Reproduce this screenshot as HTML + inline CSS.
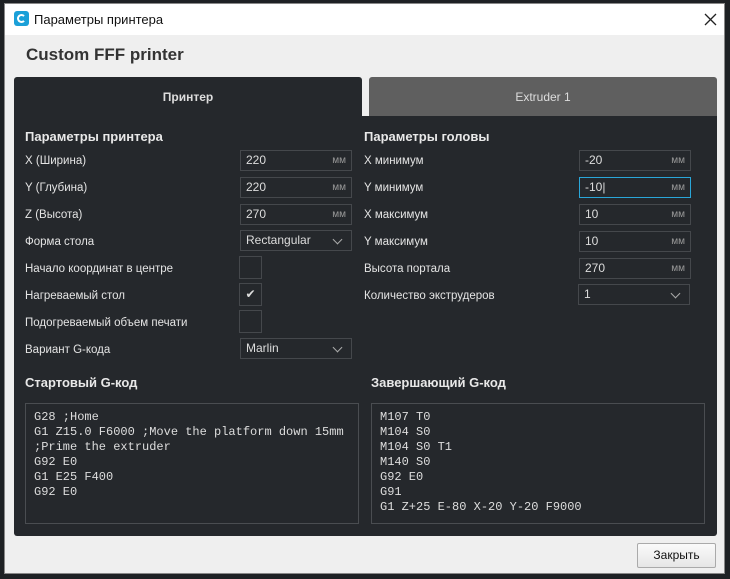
<!DOCTYPE html>
<html><head><meta charset="utf-8"><style>
*{box-sizing:border-box;margin:0;padding:0}
body{width:730px;height:579px;background:#1e2124;position:relative;overflow:hidden;font-family:"Liberation Sans","DejaVu Sans",sans-serif}
.win{position:absolute;left:4px;top:3px;width:721px;height:571px;background:#efefef;border:1px solid #888}
.title{position:absolute;left:0;top:0;right:0;height:31px;background:#fff}
.title .t{position:absolute;left:29px;top:8px;font-size:13px;color:#111}
.logo{position:absolute;left:9px;top:7px;width:15px;height:15px;background:#1ba0d8;border-radius:3px}
.logo:after{content:"";position:absolute;left:3px;top:3px;width:5px;height:5px;border:2px solid #fff;border-right-color:transparent;border-radius:50%}
.x{position:absolute;right:7px;top:9px;width:13px;height:13px}
.h1{position:absolute;left:21px;top:41px;font-size:17px;font-weight:bold;color:#333}
.panel{position:absolute;left:9px;top:112px;width:703px;height:420px;background:#25282c;border-radius:0 0 3px 3px}
.tab2{position:absolute;left:364px;top:73px;width:348px;height:39px;background:#5f5f5f;border-radius:3px 3px 0 0;color:#ddd;font-size:12px;text-align:center;line-height:41px}
.tab1{position:absolute;left:9px;top:73px;width:348px;height:40px;background:#25282c;border-radius:3px 3px 0 0;color:#ddd;font-size:12px;text-align:center;line-height:41px;font-weight:bold}
.a{position:absolute;color:#e4e4e4;font-size:11.5px;margin-top:2px}
.hd{position:absolute;color:#e8e8e8;font-size:13px;font-weight:bold}
.f{position:absolute;width:112px;height:21px;border:1px solid #45484c;color:#ddd;font-size:12px;line-height:19px;padding-left:5px}
.f i{position:absolute;right:5px;top:0;font-style:normal;font-size:10px;color:#999}
.f.sel{border-color:#2aa6d8}
.cb{position:absolute;width:23px;height:23px;border:1px solid #45484c;color:#ddd;font-size:12px;text-align:center;line-height:21px}
.chev{position:absolute;right:10px;top:5px;width:7px;height:7px;border-right:1.5px solid #aaa;border-bottom:1.5px solid #aaa;transform:rotate(45deg)}
.code{position:absolute;border:1px solid #4a4d51;font-family:"Liberation Mono",monospace;font-size:12px;line-height:15px;color:#ddd;padding:6px 8px;white-space:pre}
.btn{position:absolute;left:637px;top:543px;width:79px;height:25px;border:1px solid #aaa;background:linear-gradient(#fafafa,#e6e6e6);font-size:12px;color:#111;text-align:center;line-height:23px;border-radius:2px}
</style></head><body>
<div class="win">
<div class="title"><div class="logo"></div><div class="t">Параметры принтера</div><svg class="x" viewBox="0 0 13 13"><path d="M1 1L12 12M12 1L1 12" stroke="#222" stroke-width="1.3"/></svg></div>
<div class="h1">Custom FFF printer</div>
<div class="panel"></div>
<div class="tab2">Extruder 1</div>
<div class="tab1">Принтер</div>
</div>
<div class="hd" style="left:25px;top:129px">Параметры принтера</div>
<div class="a" style="left:25px;top:153px">X (Ширина)</div>
<div class="a" style="left:25px;top:180px">Y (Глубина)</div>
<div class="a" style="left:25px;top:207px">Z (Высота)</div>
<div class="a" style="left:25px;top:234px">Форма стола</div>
<div class="a" style="left:25px;top:261px">Начало координат в центре</div>
<div class="a" style="left:25px;top:288px">Нагреваемый стол</div>
<div class="a" style="left:25px;top:315px">Подогреваемый объем печати</div>
<div class="a" style="left:25px;top:342px">Вариант G-кода</div>
<div class="f" style="left:240px;top:150px">220<i>мм</i></div>
<div class="f" style="left:240px;top:177px">220<i>мм</i></div>
<div class="f" style="left:240px;top:204px">270<i>мм</i></div>
<div class="f" style="left:240px;top:230px">Rectangular<span class="chev"></span></div>
<div class="cb" style="left:239px;top:256px"></div>
<div class="cb" style="left:239px;top:283px">✔</div>
<div class="cb" style="left:239px;top:310px"></div>
<div class="f" style="left:240px;top:338px">Marlin<span class="chev"></span></div>
<div class="hd" style="left:364px;top:129px">Параметры головы</div>
<div class="a" style="left:364px;top:153px">X минимум</div>
<div class="a" style="left:364px;top:180px">Y минимум</div>
<div class="a" style="left:364px;top:207px">X максимум</div>
<div class="a" style="left:364px;top:234px">Y максимум</div>
<div class="a" style="left:364px;top:261px">Высота портала</div>
<div class="a" style="left:364px;top:288px">Количество экструдеров</div>
<div class="f" style="left:579px;top:150px">-20<i>мм</i></div>
<div class="f sel" style="left:579px;top:177px">-10|<i>мм</i></div>
<div class="f" style="left:579px;top:204px">10<i>мм</i></div>
<div class="f" style="left:579px;top:231px">10<i>мм</i></div>
<div class="f" style="left:579px;top:258px">270<i>мм</i></div>
<div class="f" style="left:578px;top:284px">1<span class="chev"></span></div>
<div class="hd" style="left:25px;top:375px">Стартовый G-код</div>
<div class="hd" style="left:371px;top:375px">Завершающий G-код</div>
<div class="code" style="left:25px;top:403px;width:334px;height:121px">G28 ;Home
G1 Z15.0 F6000 ;Move the platform down 15mm
;Prime the extruder
G92 E0
G1 E25 F400
G92 E0</div>
<div class="code" style="left:371px;top:403px;width:334px;height:121px">M107 T0
M104 S0
M104 S0 T1
M140 S0
G92 E0
G91
G1 Z+25 E-80 X-20 Y-20 F9000</div>
<div class="btn">Закрыть</div>
</body></html>
